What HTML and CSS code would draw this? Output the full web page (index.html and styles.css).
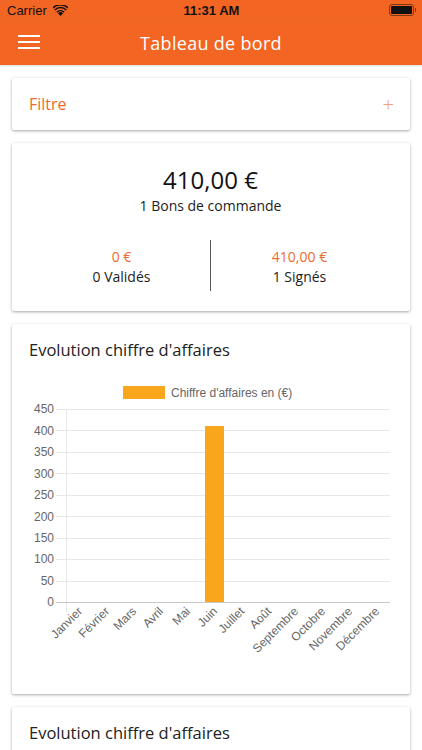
FILE: index.html
```html
<!DOCTYPE html>
<html lang="fr">

<head>
    <meta charset="UTF-8">
    <meta name="viewport" content="width=device-width, initial-scale=1.0">
    <title>Tableau de bord</title>
    <link rel="stylesheet" href="styles.css">
</head>

<body>

    <div class="statusbar">
        <div class="carrier">
            Carrier
            <svg class="wifi" width="15" height="11" viewBox="0 0 15 11">
                <path d="M7.5 11 L5 8.3 A3.6 3.6 0 0 1 10 8.3 Z" fill="#111" />
                <path d="M3.4 6.6 A5.8 5.8 0 0 1 11.6 6.6 L10.5 7.7 A4.3 4.3 0 0 0 4.5 7.7 Z" fill="#111" />
                <path d="M1.2 4.4 A8.9 8.9 0 0 1 13.8 4.4 L12.7 5.5 A7.4 7.4 0 0 0 2.3 5.5 Z" fill="#111" />
                <path d="M-0.6 2.4 A11.6 11.6 0 0 1 15.6 2.4 L14.6 3.4 A10.2 10.2 0 0 0 0.4 3.4 Z" fill="#111" />
            </svg>
        </div>
        <div class="time">11:31 AM</div>
        <div class="battery"><span></span></div>
    </div>

    <header class="topbar">
        <button class="menu" aria-label="Menu">
            <span></span>
            <span></span>
            <span></span>
        </button>
        <h1>Tableau de bord</h1>
    </header>

    <main class="content">

        <section class="card filter">
            <span class="filter-title">Filtre</span>
            <span class="filter-plus">+</span>
        </section>

        <section class="card summary">
            <div class="total">410,00 €</div>
            <div class="total-label">1 Bons de commande</div>
            <div class="split">
                <div class="split-item">
                    <div class="amount">0 €</div>
                    <div>0 Validés</div>
                </div>
                <div class="split-item">
                    <div class="amount">410,00 €</div>
                    <div>1 Signés</div>
                </div>
            </div>
        </section>

        <section class="card chart-card">
            <h2>Evolution chiffre d'affaires</h2>
            <svg class="chart" width="365" height="314" viewBox="0 0 365 314">
                <!-- legende -->
                <rect x="95" y="20" width="42" height="13" fill="#f9a61c" />
                <text x="143" y="31" class="legend">Chiffre d'affaires en (€)</text>

                <!-- grille -->
                <g stroke="#e8e8e8" stroke-width="1">
                    <line x1="28" y1="43.5" x2="362" y2="43.5" />
                    <line x1="28" y1="64.5" x2="362" y2="64.5" />
                    <line x1="28" y1="86.5" x2="362" y2="86.5" />
                    <line x1="28" y1="107.5" x2="362" y2="107.5" />
                    <line x1="28" y1="129.5" x2="362" y2="129.5" />
                    <line x1="28" y1="150.5" x2="362" y2="150.5" />
                    <line x1="28" y1="172.5" x2="362" y2="172.5" />
                    <line x1="28" y1="193.5" x2="362" y2="193.5" />
                    <line x1="28" y1="215.5" x2="362" y2="215.5" />
                    <line x1="38.5" y1="43" x2="38.5" y2="246" />
                </g>
                <line x1="28" y1="236.5" x2="362" y2="236.5" stroke="#c8c8c8" />

                <g class="ticks" text-anchor="end">
                    <text x="26" y="47">450</text>
                    <text x="26" y="69">400</text>
                    <text x="26" y="90">350</text>
                    <text x="26" y="112">300</text>
                    <text x="26" y="133">250</text>
                    <text x="26" y="155">200</text>
                    <text x="26" y="176">150</text>
                    <text x="26" y="197">100</text>
                    <text x="26" y="219">50</text>
                    <text x="26" y="240">0</text>
                </g>

                <!-- barre juin -->
                <rect x="177" y="60" width="19" height="176" fill="#f9a61c" />

                <g class="ticks" text-anchor="end">
                    <text transform="translate(55 246) rotate(-45)">Janvier</text>
                    <text transform="translate(82 246) rotate(-45)">Février</text>
                    <text transform="translate(109 246) rotate(-45)">Mars</text>
                    <text transform="translate(136 246) rotate(-45)">Avril</text>
                    <text transform="translate(163 246) rotate(-45)">Mai</text>
                    <text transform="translate(190 246) rotate(-45)">Juin</text>
                    <text transform="translate(217 246) rotate(-45)">Juillet</text>
                    <text transform="translate(244 246) rotate(-45)">Août</text>
                    <text transform="translate(271 246) rotate(-45)">Septembre</text>
                    <text transform="translate(298 246) rotate(-45)">Octobre</text>
                    <text transform="translate(325 246) rotate(-45)">Novembre</text>
                    <text transform="translate(352 246) rotate(-45)">Décembre</text>
                </g>
            </svg>
        </section>

        <section class="card chart-card">
            <h2>Evolution chiffre d'affaires</h2>
        </section>

    </main>

</body>

</html>
```

FILE: styles.css
```css
body {
    margin: 0;
    font-family: "Open Sans", sans-serif;
    color: #1d1d1d;
    background-color: #fff;
}

.statusbar {
    height: 20px;
    display: flex;
    align-items: center;
    justify-content: space-between;
    padding: 0 6px 0 7px;
    background-color: #f26522;
    font-family: "Liberation Sans", sans-serif;
    font-size: 13px;
    color: #111;
}

.carrier {
    display: flex;
    align-items: center;
    gap: 6px;
    width: 100px;
}

.time {
    font-weight: bold;
}

.battery {
    width: 100px;
    display: flex;
    justify-content: flex-end;
}

.battery span {
    width: 21px;
    height: 8px;
    border: 1px solid #7a3a17;
    border-radius: 3px;
    background-color: #111;
    background-clip: content-box;
    padding: 1px;
}

.battery::after {
    content: "";
    width: 1px;
    height: 4px;
    margin-top: 4px;
    margin-left: 1px;
    background-color: #7a3a17;
}

.topbar {
    height: 45px;
    display: flex;
    align-items: center;
    justify-content: center;
    position: relative;
    background-color: #f26522;
    box-shadow: 0 1px 2px rgba(0, 0, 0, 0.15);
}

.topbar h1 {
    margin: 0;
    font-size: 18px;
    font-weight: normal;
    color: #fff;
    letter-spacing: 0.3px;
}

.menu {
    position: absolute;
    left: 18px;
    top: 15px;
    width: 22px;
    padding: 0;
    border: none;
    background: none;
    display: flex;
    flex-direction: column;
    gap: 4px;
}

.menu span {
    display: block;
    height: 2px;
    background-color: #fff;
}

.content {
    padding: 13px 12px;
    display: flex;
    flex-direction: column;
    gap: 13px;
}

.card {
    background-color: #fff;
    border-radius: 2px;
    box-shadow: 0 1px 3px rgba(0, 0, 0, 0.35);
}

.filter {
    height: 52px;
    display: flex;
    align-items: center;
    justify-content: space-between;
    padding: 0 16px 0 17px;
}

.filter-title {
    font-size: 16px;
    color: #ee6a2c;
}

.filter-plus {
    font-size: 20px;
    font-weight: 300;
    color: #f1a079;
}

.summary {
    height: 168px;
    box-sizing: border-box;
    padding: 21px 22px 0 21px;
    text-align: center;
    font-size: 14px;
}

.total {
    font-size: 24px;
    line-height: 32px;
    color: #111;
}

.total-label {
    line-height: 20px;
}

.split {
    display: flex;
    margin-top: 24px;
}

.split-item {
    flex: 1;
    padding: 7px 0 4px;
    line-height: 20px;
}

.split-item + .split-item {
    border-left: 1px solid #555;
}

.amount {
    color: #ee6a2c;
}

.chart-card {
    padding: 14px 16px 14px 16px;
}

.chart-card h2 {
    margin: 0 0 0 1px;
    font-size: 16.5px;
    line-height: 24px;
    font-weight: normal;
    color: #222;
}

.chart {
    display: block;
    margin-top: 4px;
    font-family: "Liberation Sans", sans-serif;
}

.legend {
    font-size: 12px;
    fill: #666;
}

.ticks {
    font-size: 12px;
    fill: #666;
}
```
